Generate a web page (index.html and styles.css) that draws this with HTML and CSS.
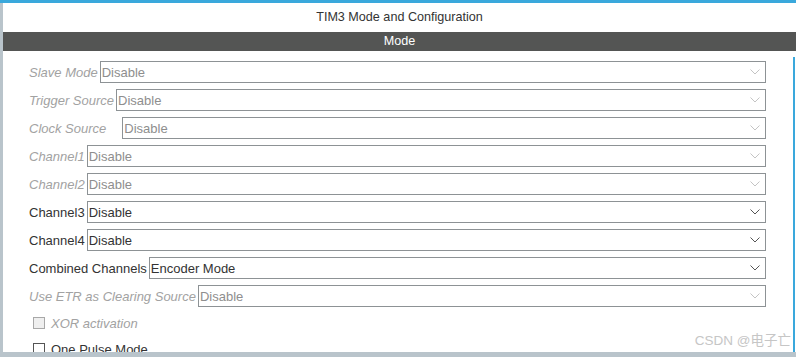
FILE: index.html
```html
<!DOCTYPE html>
<html>
<head>
<meta charset="utf-8">
<link rel="stylesheet" href="styles.css">
</head>
<body>
<div class="frame">
  <div class="panel">
    <div class="title">TIM3 Mode and Configuration</div>
    <div class="bar">Mode</div>
    <div class="form">
      <div class="row disabled"><span class="label">Slave Mode</span><div class="select"><span>Disable</span><svg class="chev" viewBox="0 0 10 6"><path d="M0.5 0.5 L5 5 L9.5 0.5"/></svg></div></div>
      <div class="row disabled"><span class="label">Trigger Source</span><div class="select"><span>Disable</span><svg class="chev" viewBox="0 0 10 6"><path d="M0.5 0.5 L5 5 L9.5 0.5"/></svg></div></div>
      <div class="row disabled"><span class="label wide">Clock Source</span><div class="select"><span>Disable</span><svg class="chev" viewBox="0 0 10 6"><path d="M0.5 0.5 L5 5 L9.5 0.5"/></svg></div></div>
      <div class="row disabled"><span class="label">Channel1</span><div class="select"><span>Disable</span><svg class="chev" viewBox="0 0 10 6"><path d="M0.5 0.5 L5 5 L9.5 0.5"/></svg></div></div>
      <div class="row disabled"><span class="label">Channel2</span><div class="select"><span>Disable</span><svg class="chev" viewBox="0 0 10 6"><path d="M0.5 0.5 L5 5 L9.5 0.5"/></svg></div></div>
      <div class="row"><span class="label">Channel3</span><div class="select"><span>Disable</span><svg class="chev" viewBox="0 0 10 6"><path d="M0.5 0.5 L5 5 L9.5 0.5"/></svg></div></div>
      <div class="row"><span class="label">Channel4</span><div class="select"><span>Disable</span><svg class="chev" viewBox="0 0 10 6"><path d="M0.5 0.5 L5 5 L9.5 0.5"/></svg></div></div>
      <div class="row"><span class="label">Combined Channels</span><div class="select"><span>Encoder Mode</span><svg class="chev" viewBox="0 0 10 6"><path d="M0.5 0.5 L5 5 L9.5 0.5"/></svg></div></div>
      <div class="row disabled"><span class="label">Use ETR as Clearing Source</span><div class="select"><span>Disable</span><svg class="chev" viewBox="0 0 10 6"><path d="M0.5 0.5 L5 5 L9.5 0.5"/></svg></div></div>
      <div class="check disabled"><span class="box"></span><span class="clabel">XOR activation</span></div>
      <div class="check"><span class="box"></span><span class="clabel">One Pulse Mode</span></div>
    </div>
    <div class="scroll"></div>
    <div class="watermark">CSDN @电子亡</div>
  </div>
</div>
</body>
</html>
```

FILE: styles.css
```css
html, body {
  margin: 0;
  padding: 0;
}
body {
  background: #b9c4cb;
  width: 796px;
  height: 357px;
  overflow: hidden;
  font-family: "Liberation Sans", Arial, "Noto Sans CJK SC", sans-serif;
  font-size: 13px;
  color: #333;
}
.frame {
  border-top: 3px solid #3aa8dc;
  height: 354px;
  box-sizing: border-box;
}
.panel {
  position: relative;
  margin-left: 3px;
  height: 349px;
  background: #fff;
  overflow: hidden;
}
.title {
  height: 29px;
  line-height: 28px;
  text-align: center;
  color: #333;
  font-size: 12.6px;
}
.bar {
  height: 19px;
  line-height: 19px;
  background: #545554;
  color: #fff;
  text-align: center;
  font-size: 12.6px;
}
.form {
  padding: 10px 30px 0 26px;
  display: flex;
  flex-direction: column;
  gap: 6px;
}
.row {
  display: flex;
  align-items: center;
  height: 22px;
}
.label {
  padding-right: 2px;
  white-space: nowrap;
  color: #333;
}
.label.wide {
  padding-right: 16px;
}
.select {
  flex: 1;
  height: 22px;
  box-sizing: border-box;
  border: 1px solid #8d9295;
  display: flex;
  align-items: center;
  justify-content: space-between;
  padding: 0 5px 0 1px;
  color: #333;
}
.chev {
  width: 10px;
  height: 6px;
  fill: none;
  stroke: #555;
  stroke-width: 1;
}
.row.disabled .label {
  font-style: italic;
  color: #a2a2a2;
}
.row.disabled .select {
  color: #8e8e8e;
}
.row.disabled .chev {
  stroke: #c4c4c4;
}
.check {
  display: flex;
  align-items: center;
  height: 20px;
  padding-left: 4px;
  gap: 6px;
}
.box {
  width: 10px;
  height: 10px;
  border: 1px solid #555;
  background: #fff;
}
.check.disabled .box {
  border-color: #a8a8a8;
  background: #efefef;
}
.check.disabled .clabel {
  font-style: italic;
  color: #a2a2a2;
}
.scroll {
  position: absolute;
  right: 1px;
  top: 54px;
  width: 2px;
  bottom: 0;
  background: #3aa8dc;
}
.watermark {
  position: absolute;
  right: 5px;
  bottom: 3px;
  font-size: 13.5px;
  color: #c6c6c6;
  font-family: "Liberation Sans", "Noto Sans CJK SC", sans-serif;
}
```
